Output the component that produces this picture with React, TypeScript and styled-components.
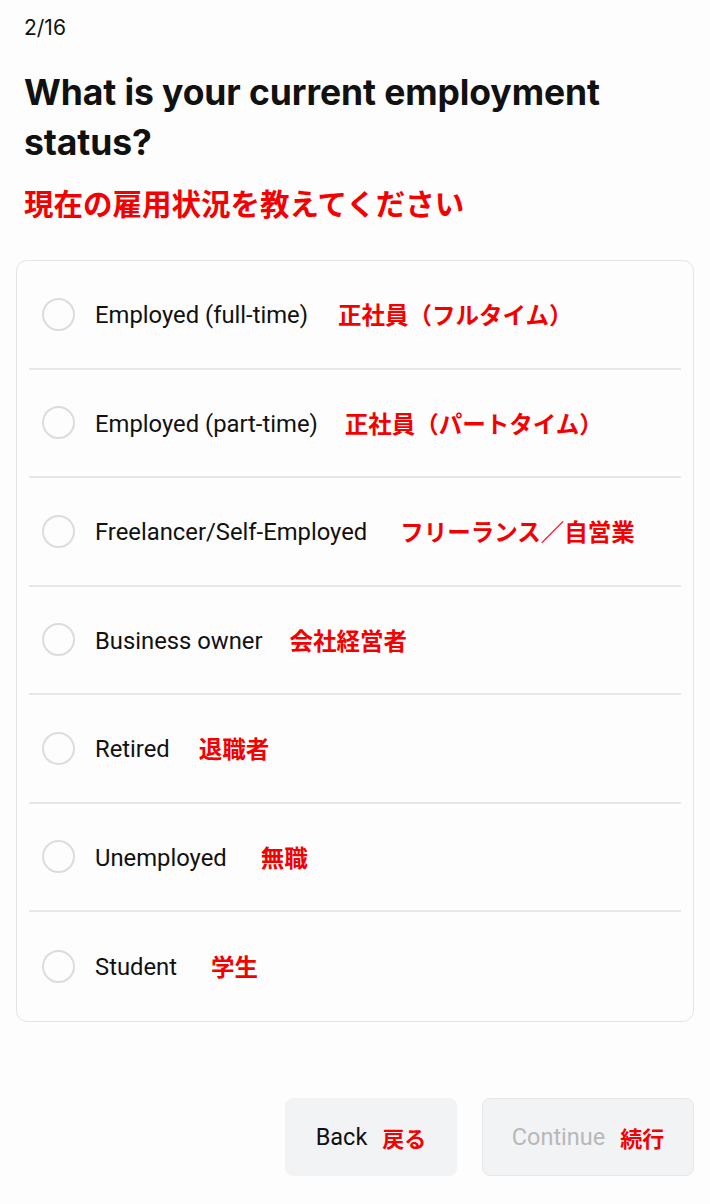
import React, { useState } from 'react'
import styled, { createGlobalStyle } from 'styled-components'

const GlobalStyle = createGlobalStyle`
  html, body {
    margin: 0;
    padding: 0;
    background: #fdfdfd;
  }
  body {
    font-family: Roboto, "Noto Sans CJK JP", sans-serif;
    color: #111;
  }
`

const Page = styled.div`
  display: flex;
  flex-direction: column;
  width: 710px;
  height: 1204px;
  box-sizing: border-box;
  padding: 0 16px;
`

const Header = styled.div`
  display: flex;
  flex-direction: column;
  padding: 14px 8px 0;
`

const Step = styled.div`
  font-family: Inter, sans-serif;
  font-size: 21px;
  line-height: 28px;
  color: #111;
`

const Title = styled.h1`
  margin: 26px 0 0;
  max-width: 620px;
  font-family: Inter, sans-serif;
  font-size: 35.5px;
  font-weight: 700;
  line-height: 50px;
  letter-spacing: -0.1px;
  color: #111;
`

const SubTitle = styled.div`
  margin-top: 14px;
  font-family: "Noto Sans CJK JP", sans-serif;
  font-size: 29.5px;
  font-weight: 700;
  line-height: 40px;
  color: #f40000;
`

const Card = styled.div`
  margin-top: 38px;
  display: flex;
  flex-direction: column;
  border: 1.5px solid #e4e4e4;
  border-radius: 11px;
  background: #fdfdfd;
  padding: 0 12px;
`

const Option = styled.label<{ $last?: boolean }>`
  display: flex;
  align-items: center;
  box-sizing: border-box;
  height: 108.5px;
  padding-left: 13px;
  border-bottom: ${p => (p.$last ? 'none' : '2px solid #e8e8e8')};
  cursor: pointer;
`

const Radio = styled.span<{ $checked?: boolean }>`
  width: 29px;
  height: 29px;
  border-radius: 50%;
  border: 2px solid ${p => (p.$checked ? '#f40000' : '#dcdcdc')};
  box-sizing: content-box;
  flex-shrink: 0;
`

const Label = styled.span`
  margin-left: 20px;
  padding-top: 2px;
  font-family: Roboto, sans-serif;
  font-size: 23.8px;
  color: #111;
`

const JpLabel = styled.span<{ $gap: number }>`
  margin-left: ${p => p.$gap}px;
  font-family: "Noto Sans CJK JP", sans-serif;
  font-size: 23.5px;
  font-weight: 700;
  color: #f40000;
`

const Footer = styled.div`
  margin-top: auto;
  margin-bottom: 28px;
  display: flex;
  justify-content: flex-end;
  gap: 25px;
`

const Button = styled.button<{ $disabled?: boolean }>`
  height: 78px;
  width: ${p => (p.$disabled ? '212px' : '172px')};
  display: flex;
  align-items: center;
  justify-content: center;
  gap: 15px;
  border-radius: 8px;
  background: #f2f3f5;
  border: 1.5px solid ${p => (p.$disabled ? '#e6e7e9' : '#f2f3f5')};
  font-family: Roboto, sans-serif;
  font-size: 23.5px;
  color: ${p => (p.$disabled ? '#b8b8b8' : '#111')};
  cursor: pointer;
`

const ButtonJp = styled.span`
  font-family: "Noto Sans CJK JP", sans-serif;
  font-weight: 700;
  font-size: 22px;
  color: #f40000;
`

const options = [
  { en: 'Employed (full-time)', jp: '正社員（フルタイム）', gap: 30 },
  { en: 'Employed (part-time)', jp: '正社員（パートタイム）', gap: 27 },
  { en: 'Freelancer/Self-Employed', jp: 'フリーランス／自営業', gap: 33 },
  { en: 'Business owner', jp: '会社経営者', gap: 27 },
  { en: 'Retired', jp: '退職者', gap: 29 },
  { en: 'Unemployed', jp: '無職', gap: 34 },
  { en: 'Student', jp: '学生', gap: 34 },
]

const App = () => {
  const [selected, setSelected] = useState<number | null>(null)
  return (
    <Page>
      <GlobalStyle />
      <Header>
        <Step>2/16</Step>
        <Title>What is your current employment status?</Title>
        <SubTitle>現在の雇用状況を教えてください</SubTitle>
      </Header>
      <Card>
        {options.map((o, i) => (
          <Option key={o.en} $last={i === options.length - 1} onClick={() => setSelected(i)}>
            <Radio $checked={selected === i} />
            <Label>{o.en}</Label>
            <JpLabel $gap={o.gap}>{o.jp}</JpLabel>
          </Option>
        ))}
      </Card>
      <Footer>
        <Button>
          Back<ButtonJp>戻る</ButtonJp>
        </Button>
        <Button $disabled>
          Continue<ButtonJp>続行</ButtonJp>
        </Button>
      </Footer>
    </Page>
  )
}

export default App
